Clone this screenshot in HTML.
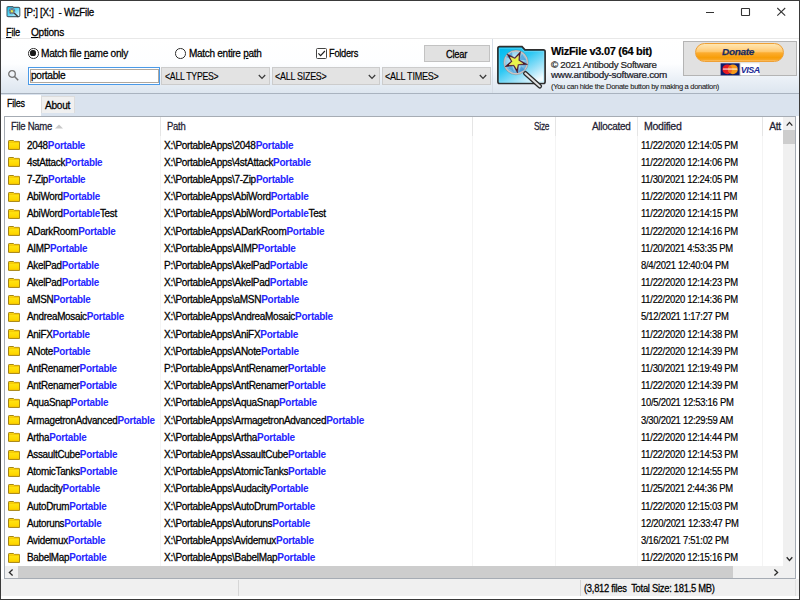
<!DOCTYPE html>
<html><head><meta charset="utf-8">
<style>
html,body{margin:0;padding:0;width:800px;height:600px;overflow:hidden;background:#fff;}
*{box-sizing:border-box;}
body{font-family:"Liberation Sans",sans-serif;font-size:10.5px;line-height:1;letter-spacing:-0.3px;color:#000;position:relative;}
.a{position:absolute;white-space:pre;}
.t{-webkit-text-stroke-width:0.26px;}
#win{position:absolute;left:0;top:0;width:800px;height:600px;border:1px solid #3a3a3a;}
.u{text-decoration:underline;text-underline-offset:1px;text-decoration-thickness:1px;}
#msep{left:1px;top:38px;width:798px;height:1px;background:#e8e8e8;}
#panel{left:1px;top:39px;width:798px;height:55px;background:linear-gradient(#ffffff 0%,#fdfeff 45%,#e9eff6 75%,#dce5ef 100%);}
#psep{left:492px;top:39px;width:1px;height:55px;background:#d6dde6;}
#pbot{left:1px;top:93px;width:798px;height:1px;background:#a9b3bf;}
#tabstrip{left:1px;top:94px;width:798px;height:22px;background:#dae3ee;}
.radio{width:10.6px;height:10.6px;border:1.3px solid #2e2e2e;border-radius:50%;background:#fff;}
.radio.on::after{content:"";position:absolute;left:1.4px;top:1.4px;width:5.2px;height:5.2px;border-radius:50%;background:#1a1a1a;}
.chk{width:11px;height:11px;border:1.25px solid #444;border-radius:1.5px;background:#fff;}
.btn{background:#e1e1e1;border:1px solid #c2c2c2;}
.combo{background:#e3e3e3;border:1px solid #cccccc;height:17.5px;top:67.2px;}
.combo svg{position:absolute;right:2.5px;top:6.2px;}
#search{left:28px;top:67.2px;width:132px;height:17.5px;border:1px solid #4a9ae8;background:#fff;}
#search .inner{position:absolute;left:0.5px;top:0.5px;right:0.5px;bottom:0.5px;border:1px solid #b0a89e;}
#tabFiles{left:1px;top:95px;width:40px;height:22px;background:#fff;}
#tabAbout{left:41px;top:96px;width:34px;height:17px;background:#f0f0f0;border:1px solid #dcdcdc;border-bottom:none;}
#list{left:4px;top:116px;width:792px;height:463px;border:1px solid #a6acb4;background:#fff;}
.hsep{top:117px;width:1px;height:19px;background:#e5e5e5;}
.csep{top:136px;width:1px;height:430px;background:#f4f4f4;}
.row{position:absolute;left:0;width:783px;height:17px;}
.row .c{position:absolute;top:3.0px;white-space:pre;transform-origin:0 0;-webkit-text-stroke-width:0.28px;}
.row .ic{position:absolute;top:3.6px;line-height:0;}
.row b{color:#2626ff;font-weight:bold;-webkit-text-stroke-width:0.05px;}
#vscroll{left:783px;top:117px;width:12px;height:449px;background:#f0f0f0;}
#vthumb{left:783px;top:130px;width:12px;height:14px;background:#cdcdcd;}
#hscroll{left:5px;top:566px;width:790px;height:12px;background:#f0f0f0;}
#hthumb{left:18px;top:566px;width:715px;height:12px;background:#cdcdcd;}
#status{left:1px;top:579px;width:798px;height:20px;background:#f0f0f0;}
#stsep{left:579.5px;top:580px;width:1px;height:15.5px;background:#d6d6d6;}
#stsep3{left:795px;top:580px;width:1px;height:15.5px;background:#e0e0e0;}
#stsep2{left:237.5px;top:580px;width:1px;height:15.5px;background:#d6d6d6;}
#stbot{left:1px;top:596px;width:798px;height:3px;background:#fff;}
#donbox{left:683px;top:41px;width:114px;height:35px;background:#e1e1e1;border:1px solid #b4b4b4;}
#pill{left:695.2px;top:42.5px;width:88.6px;height:19.5px;border-radius:10px;border:1px solid #efa035;background:linear-gradient(#ffe6b0 0%,#ffd792 25%,#ffc86a 45%,#fcad30 52%,#f79e08 80%,#f8a622 92%,#fcc06a 100%);}
</style></head><body>
<div id="win"></div>
<svg width="0" height="0" style="position:absolute"><defs><linearGradient id="fg" x1="0" y1="0" x2="0" y2="1"><stop offset="0" stop-color="#ffe81a"/><stop offset="0.75" stop-color="#ffd800"/><stop offset="1" stop-color="#eebc00"/></linearGradient></defs></svg>

<!-- title bar -->
<svg class="a" style="left:6px;top:5px" width="16" height="14" viewBox="0 0 16 14">
 <defs><linearGradient id="tg" x1="0" y1="0" x2="1" y2="1"><stop offset="0" stop-color="#00c4f2"/><stop offset="0.5" stop-color="#5cd8f8"/><stop offset="1" stop-color="#f4fcff"/></linearGradient></defs>
 <path d="M2.2 1.6 L6.6 1.6 L7.6 2.4 L12.6 2.4 Q13.8 2.4 13.8 3.6 L13.8 10.4 Q13.8 11.6 12.6 11.6 L2.2 11.6 Q1 11.6 1 10.4 L1 2.8 Q1 1.6 2.2 1.6 Z" fill="url(#tg)" stroke="#4a6470" stroke-width="1.1"/>
 <path d="M8.6 8.4 L11.8 11.5" stroke="#3a3a3a" stroke-width="1.4" stroke-linecap="round"/>
 <circle cx="5.9" cy="6" r="2.9" fill="#5aa8d8" stroke="#7a8a9a" stroke-width="0.9"/>
 <path d="M5.9 3.5 L6.7 5.3 L8.5 5.4 L7.1 6.6 L7.6 8.4 L5.9 7.4 L4.2 8.4 L4.7 6.6 L3.3 5.4 L5.1 5.3 Z" fill="#f2f24a" stroke="#3a3a6a" stroke-width="0.5"/>
</svg>
<svg class="a" style="left:700px;top:0" width="99" height="22" viewBox="0 0 99 22">
 <path d="M6 12.5 H14" stroke="#333" stroke-width="1"/>
 <rect x="41.5" y="8.5" width="8" height="7" rx="0.5" fill="none" stroke="#333" stroke-width="1.1"/>
 <path d="M77.3 8 L85.2 15.7 M85.2 8 L77.3 15.7" stroke="#333" stroke-width="1.05"/>
</svg>
<div class="a" id="msep"></div>

<!-- top panel -->
<div class="a" id="panel"></div>
<div class="a" id="psep"></div>
<div class="a" id="pbot"></div>
<div class="a" id="tabstrip"></div>

<div class="a radio on" style="left:28.1px;top:48.1px"></div>
<div class="a radio" style="left:175.3px;top:48.1px"></div>
<div class="a chk" style="left:316px;top:48px"></div>
<svg class="a" style="left:316px;top:48px" width="11" height="11" viewBox="0 0 11 11"><path d="M2.4 5.3 L4.6 7.6 L8.9 3" fill="none" stroke="#222" stroke-width="1.2"/></svg>
<div class="a btn" style="left:424px;top:45.3px;width:66px;height:16.5px"></div>

<svg class="a" style="left:8px;top:70px" width="12" height="12" viewBox="0 0 12 12">
 <circle cx="4" cy="4" r="3.3" fill="none" stroke="#747474" stroke-width="1.3"/>
 <path d="M6.5 6.5 L10.2 10.2" stroke="#747474" stroke-width="1.5"/>
</svg>
<div class="a" id="search"><div class="inner"></div></div>

<div class="a combo" style="left:161.2px;width:108.5px"><svg width="8" height="6" viewBox="0 0 8 6"><path d="M0.8 1 L4 4.4 L7.2 1" fill="none" stroke="#3a3a3a" stroke-width="1.25"/></svg></div>
<div class="a combo" style="left:271.6px;width:108.2px"><svg width="8" height="6" viewBox="0 0 8 6"><path d="M0.8 1 L4 4.4 L7.2 1" fill="none" stroke="#3a3a3a" stroke-width="1.25"/></svg></div>
<div class="a combo" style="left:381.5px;width:109px"><svg width="8" height="6" viewBox="0 0 8 6"><path d="M0.8 1 L4 4.4 L7.2 1" fill="none" stroke="#3a3a3a" stroke-width="1.25"/></svg></div>

<!-- logo -->
<svg class="a" style="left:490px;top:40px" width="60" height="50" viewBox="490 40 60 50">
 <defs>
  <linearGradient id="lg" x1="0.1" y1="0" x2="0.9" y2="1"><stop offset="0" stop-color="#00bcf0"/><stop offset="0.4" stop-color="#2ec8f3"/><stop offset="0.72" stop-color="#a6e4f9"/><stop offset="0.92" stop-color="#f2fbff"/></linearGradient>
  <radialGradient id="lens" cx="0.45" cy="0.4" r="0.7"><stop offset="0" stop-color="#d8f2fb"/><stop offset="0.55" stop-color="#8fd0ee"/><stop offset="1" stop-color="#3a8ed0"/></radialGradient>
 </defs>
 <path d="M499.6 46.6 L522 46.6 L525 49.9 L543.4 49.9 Q545.1 49.9 545.1 51.6 L545.1 81.8 Q545.1 83.5 543.4 83.5 L499.6 83.5 Q497.9 83.5 497.9 81.8 L497.9 48.3 Q497.9 46.6 499.6 46.6 Z" fill="url(#lg)" stroke="#2e2e2e" stroke-width="1.7"/>
 <path d="M499.4 48.3 L521.3 48.3 L524.3 51.5 L543.5 51.5 L543.5 82 L499.4 82 Z" fill="none" stroke="#8fe0f8" stroke-width="0.6" opacity="0.7"/>
 <path d="M525.3 73.3 L539.8 86.3" stroke="#2a2a2a" stroke-width="4.6" stroke-linecap="round"/>
 <path d="M525.3 73.3 L539.8 86.3" stroke="#e0e0e0" stroke-width="2" stroke-linecap="round"/>
 <circle cx="515.9" cy="62.4" r="11.5" fill="url(#lens)" stroke="#cbc4c4" stroke-width="1.6"/>
 <circle cx="515.9" cy="62.4" r="12.4" fill="none" stroke="#6a6a6a" stroke-width="0.5" opacity="0.6"/>
 <path d="M506 57 L512 52 L513 60 Z M522 54 L526 60 L519 60 Z M508 68 L514 72 L512 65 Z M521 66 L525 70 L519 72 Z" fill="#2f8ad2" opacity="0.55"/>
  <path d="M520.50 51.50 L519.36 60.04 L527.50 64.50 L518.49 65.03 L517.50 73.00 L513.50 65.75 L505.00 66.70 L511.26 61.24 L507.00 54.00 L514.70 57.71 Z" fill="#4a1526" stroke="#4a1526" stroke-width="0.5" stroke-linejoin="miter"/>
 <path d="M518.60 55.47 L518.28 60.57 L522.94 63.53 L517.66 64.17 L516.74 68.80 L514.06 64.69 L508.99 64.89 L512.44 61.44 L510.23 57.02 L514.93 58.89 Z" fill="#e9f54a" stroke="#f4f8a0" stroke-width="0.4"/>
</svg>

<div class="a" id="donbox"></div>
<div class="a" id="pill"></div>
<svg class="a" style="left:720px;top:63px" width="40" height="13" viewBox="0 0 40 13">
 <rect x="0.6" y="0.3" width="19" height="12" fill="#0c1c6c"/>
 <circle cx="7.3" cy="6.3" r="4.9" fill="#e41b23"/>
 <circle cx="12.9" cy="6.3" r="4.9" fill="#f59a1a"/>
 <path d="M10.1 2.3 A4.9 4.9 0 0 1 10.1 10.3 A4.9 4.9 0 0 1 10.1 2.3 Z" fill="#f26522"/>
 <rect x="3" y="5.2" width="14" height="1.8" fill="#ffffff" opacity="0.55"/>
 <rect x="21" y="0.3" width="18.5" height="12" fill="#ffffff"/>
 <text x="30.3" y="9.9" font-family="Liberation Sans" font-weight="bold" font-style="italic" font-size="9" letter-spacing="-0.5" fill="#1b2a96" text-anchor="middle">VISA</text>
</svg>

<!-- tabs -->
<div class="a" id="tabFiles"></div>
<div class="a" id="tabAbout"></div>

<!-- list -->
<div class="a" id="list"></div>
<div class="a hsep" style="left:160px"></div>
<div class="a hsep" style="left:472px"></div>
<div class="a hsep" style="left:555px"></div>
<div class="a hsep" style="left:637px"></div>
<div class="a hsep" style="left:762px"></div>
<div class="a csep" style="left:160px"></div>
<div class="a csep" style="left:472px"></div>
<div class="a csep" style="left:555px"></div>
<div class="a csep" style="left:637px"></div>
<div class="a csep" style="left:762px"></div>
<svg class="a" style="left:55px;top:124px" width="8" height="5" viewBox="0 0 8 5"><path d="M0 4.5 L4 0.5 L8 4.5 Z" fill="#c8c8c8"/></svg>

<div class="row" style="top:136.60px"><span class="ic" style="left:8px"><svg width="12" height="10" viewBox="0 0 12 10"><path d="M0.5 1.2 Q0.5 0.5 1.2 0.5 L5.4 0.5 L6.4 1.4 L11 1.4 Q11.6 1.4 11.6 2 L11.6 9 Q11.6 9.6 11 9.6 L1.2 9.6 Q0.5 9.6 0.5 9 Z" fill="url(#fg)" stroke="#9a7808" stroke-width="0.9"/><path d="M1 2.1 L11.1 2.1" stroke="#f2bc00" stroke-width="1"/></svg></span><span class="c" style="left:26.7px;transform:scaleX(0.94)">2048<b>Portable</b></span><span class="c" style="left:164.2px;transform:scaleX(0.953)">X:\PortableApps\2048<b>Portable</b></span><span class="c dt" style="left:641px;transform:scaleX(0.9);-webkit-text-stroke-width:0.18px">11/22/2020 12:14:05 PM</span></div>
<div class="row" style="top:153.79px"><span class="ic" style="left:8px"><svg width="12" height="10" viewBox="0 0 12 10"><path d="M0.5 1.2 Q0.5 0.5 1.2 0.5 L5.4 0.5 L6.4 1.4 L11 1.4 Q11.6 1.4 11.6 2 L11.6 9 Q11.6 9.6 11 9.6 L1.2 9.6 Q0.5 9.6 0.5 9 Z" fill="url(#fg)" stroke="#9a7808" stroke-width="0.9"/><path d="M1 2.1 L11.1 2.1" stroke="#f2bc00" stroke-width="1"/></svg></span><span class="c" style="left:26.7px;transform:scaleX(0.94)">4stAttack<b>Portable</b></span><span class="c" style="left:164.2px;transform:scaleX(0.953)">X:\PortableApps\4stAttack<b>Portable</b></span><span class="c dt" style="left:641px;transform:scaleX(0.9);-webkit-text-stroke-width:0.18px">11/22/2020 12:14:06 PM</span></div>
<div class="row" style="top:170.97px"><span class="ic" style="left:8px"><svg width="12" height="10" viewBox="0 0 12 10"><path d="M0.5 1.2 Q0.5 0.5 1.2 0.5 L5.4 0.5 L6.4 1.4 L11 1.4 Q11.6 1.4 11.6 2 L11.6 9 Q11.6 9.6 11 9.6 L1.2 9.6 Q0.5 9.6 0.5 9 Z" fill="url(#fg)" stroke="#9a7808" stroke-width="0.9"/><path d="M1 2.1 L11.1 2.1" stroke="#f2bc00" stroke-width="1"/></svg></span><span class="c" style="left:26.7px;transform:scaleX(0.94)">7-Zip<b>Portable</b></span><span class="c" style="left:164.2px;transform:scaleX(0.953)">X:\PortableApps\7-Zip<b>Portable</b></span><span class="c dt" style="left:641px;transform:scaleX(0.9);-webkit-text-stroke-width:0.18px">11/30/2021 12:24:05 PM</span></div>
<div class="row" style="top:188.16px"><span class="ic" style="left:8px"><svg width="12" height="10" viewBox="0 0 12 10"><path d="M0.5 1.2 Q0.5 0.5 1.2 0.5 L5.4 0.5 L6.4 1.4 L11 1.4 Q11.6 1.4 11.6 2 L11.6 9 Q11.6 9.6 11 9.6 L1.2 9.6 Q0.5 9.6 0.5 9 Z" fill="url(#fg)" stroke="#9a7808" stroke-width="0.9"/><path d="M1 2.1 L11.1 2.1" stroke="#f2bc00" stroke-width="1"/></svg></span><span class="c" style="left:26.7px;transform:scaleX(0.94)">AbiWord<b>Portable</b></span><span class="c" style="left:164.2px;transform:scaleX(0.953)">X:\PortableApps\AbiWord<b>Portable</b></span><span class="c dt" style="left:641px;transform:scaleX(0.9);-webkit-text-stroke-width:0.18px">11/22/2020 12:14:11 PM</span></div>
<div class="row" style="top:205.35px"><span class="ic" style="left:8px"><svg width="12" height="10" viewBox="0 0 12 10"><path d="M0.5 1.2 Q0.5 0.5 1.2 0.5 L5.4 0.5 L6.4 1.4 L11 1.4 Q11.6 1.4 11.6 2 L11.6 9 Q11.6 9.6 11 9.6 L1.2 9.6 Q0.5 9.6 0.5 9 Z" fill="url(#fg)" stroke="#9a7808" stroke-width="0.9"/><path d="M1 2.1 L11.1 2.1" stroke="#f2bc00" stroke-width="1"/></svg></span><span class="c" style="left:26.7px;transform:scaleX(0.94)">AbiWord<b>Portable</b>Test</span><span class="c" style="left:164.2px;transform:scaleX(0.953)">X:\PortableApps\AbiWord<b>Portable</b>Test</span><span class="c dt" style="left:641px;transform:scaleX(0.9);-webkit-text-stroke-width:0.18px">11/22/2020 12:14:15 PM</span></div>
<div class="row" style="top:222.54px"><span class="ic" style="left:8px"><svg width="12" height="10" viewBox="0 0 12 10"><path d="M0.5 1.2 Q0.5 0.5 1.2 0.5 L5.4 0.5 L6.4 1.4 L11 1.4 Q11.6 1.4 11.6 2 L11.6 9 Q11.6 9.6 11 9.6 L1.2 9.6 Q0.5 9.6 0.5 9 Z" fill="url(#fg)" stroke="#9a7808" stroke-width="0.9"/><path d="M1 2.1 L11.1 2.1" stroke="#f2bc00" stroke-width="1"/></svg></span><span class="c" style="left:26.7px;transform:scaleX(0.94)">ADarkRoom<b>Portable</b></span><span class="c" style="left:164.2px;transform:scaleX(0.953)">X:\PortableApps\ADarkRoom<b>Portable</b></span><span class="c dt" style="left:641px;transform:scaleX(0.9);-webkit-text-stroke-width:0.18px">11/22/2020 12:14:16 PM</span></div>
<div class="row" style="top:239.72px"><span class="ic" style="left:8px"><svg width="12" height="10" viewBox="0 0 12 10"><path d="M0.5 1.2 Q0.5 0.5 1.2 0.5 L5.4 0.5 L6.4 1.4 L11 1.4 Q11.6 1.4 11.6 2 L11.6 9 Q11.6 9.6 11 9.6 L1.2 9.6 Q0.5 9.6 0.5 9 Z" fill="url(#fg)" stroke="#9a7808" stroke-width="0.9"/><path d="M1 2.1 L11.1 2.1" stroke="#f2bc00" stroke-width="1"/></svg></span><span class="c" style="left:26.7px;transform:scaleX(0.94)">AIMP<b>Portable</b></span><span class="c" style="left:164.2px;transform:scaleX(0.953)">X:\PortableApps\AIMP<b>Portable</b></span><span class="c dt" style="left:641px;transform:scaleX(0.9);-webkit-text-stroke-width:0.18px">11/20/2021 4:53:35 PM</span></div>
<div class="row" style="top:256.91px"><span class="ic" style="left:8px"><svg width="12" height="10" viewBox="0 0 12 10"><path d="M0.5 1.2 Q0.5 0.5 1.2 0.5 L5.4 0.5 L6.4 1.4 L11 1.4 Q11.6 1.4 11.6 2 L11.6 9 Q11.6 9.6 11 9.6 L1.2 9.6 Q0.5 9.6 0.5 9 Z" fill="url(#fg)" stroke="#9a7808" stroke-width="0.9"/><path d="M1 2.1 L11.1 2.1" stroke="#f2bc00" stroke-width="1"/></svg></span><span class="c" style="left:26.7px;transform:scaleX(0.94)">AkelPad<b>Portable</b></span><span class="c" style="left:164.2px;transform:scaleX(0.953)">P:\PortableApps\AkelPad<b>Portable</b></span><span class="c dt" style="left:641px;transform:scaleX(0.9);-webkit-text-stroke-width:0.18px">8/4/2021 12:40:04 PM</span></div>
<div class="row" style="top:274.10px"><span class="ic" style="left:8px"><svg width="12" height="10" viewBox="0 0 12 10"><path d="M0.5 1.2 Q0.5 0.5 1.2 0.5 L5.4 0.5 L6.4 1.4 L11 1.4 Q11.6 1.4 11.6 2 L11.6 9 Q11.6 9.6 11 9.6 L1.2 9.6 Q0.5 9.6 0.5 9 Z" fill="url(#fg)" stroke="#9a7808" stroke-width="0.9"/><path d="M1 2.1 L11.1 2.1" stroke="#f2bc00" stroke-width="1"/></svg></span><span class="c" style="left:26.7px;transform:scaleX(0.94)">AkelPad<b>Portable</b></span><span class="c" style="left:164.2px;transform:scaleX(0.953)">X:\PortableApps\AkelPad<b>Portable</b></span><span class="c dt" style="left:641px;transform:scaleX(0.9);-webkit-text-stroke-width:0.18px">11/22/2020 12:14:23 PM</span></div>
<div class="row" style="top:291.29px"><span class="ic" style="left:8px"><svg width="12" height="10" viewBox="0 0 12 10"><path d="M0.5 1.2 Q0.5 0.5 1.2 0.5 L5.4 0.5 L6.4 1.4 L11 1.4 Q11.6 1.4 11.6 2 L11.6 9 Q11.6 9.6 11 9.6 L1.2 9.6 Q0.5 9.6 0.5 9 Z" fill="url(#fg)" stroke="#9a7808" stroke-width="0.9"/><path d="M1 2.1 L11.1 2.1" stroke="#f2bc00" stroke-width="1"/></svg></span><span class="c" style="left:26.7px;transform:scaleX(0.94)">aMSN<b>Portable</b></span><span class="c" style="left:164.2px;transform:scaleX(0.953)">X:\PortableApps\aMSN<b>Portable</b></span><span class="c dt" style="left:641px;transform:scaleX(0.9);-webkit-text-stroke-width:0.18px">11/22/2020 12:14:36 PM</span></div>
<div class="row" style="top:308.48px"><span class="ic" style="left:8px"><svg width="12" height="10" viewBox="0 0 12 10"><path d="M0.5 1.2 Q0.5 0.5 1.2 0.5 L5.4 0.5 L6.4 1.4 L11 1.4 Q11.6 1.4 11.6 2 L11.6 9 Q11.6 9.6 11 9.6 L1.2 9.6 Q0.5 9.6 0.5 9 Z" fill="url(#fg)" stroke="#9a7808" stroke-width="0.9"/><path d="M1 2.1 L11.1 2.1" stroke="#f2bc00" stroke-width="1"/></svg></span><span class="c" style="left:26.7px;transform:scaleX(0.94)">AndreaMosaic<b>Portable</b></span><span class="c" style="left:164.2px;transform:scaleX(0.953)">X:\PortableApps\AndreaMosaic<b>Portable</b></span><span class="c dt" style="left:641px;transform:scaleX(0.9);-webkit-text-stroke-width:0.18px">5/12/2021 1:17:27 PM</span></div>
<div class="row" style="top:325.66px"><span class="ic" style="left:8px"><svg width="12" height="10" viewBox="0 0 12 10"><path d="M0.5 1.2 Q0.5 0.5 1.2 0.5 L5.4 0.5 L6.4 1.4 L11 1.4 Q11.6 1.4 11.6 2 L11.6 9 Q11.6 9.6 11 9.6 L1.2 9.6 Q0.5 9.6 0.5 9 Z" fill="url(#fg)" stroke="#9a7808" stroke-width="0.9"/><path d="M1 2.1 L11.1 2.1" stroke="#f2bc00" stroke-width="1"/></svg></span><span class="c" style="left:26.7px;transform:scaleX(0.94)">AniFX<b>Portable</b></span><span class="c" style="left:164.2px;transform:scaleX(0.953)">X:\PortableApps\AniFX<b>Portable</b></span><span class="c dt" style="left:641px;transform:scaleX(0.9);-webkit-text-stroke-width:0.18px">11/22/2020 12:14:38 PM</span></div>
<div class="row" style="top:342.85px"><span class="ic" style="left:8px"><svg width="12" height="10" viewBox="0 0 12 10"><path d="M0.5 1.2 Q0.5 0.5 1.2 0.5 L5.4 0.5 L6.4 1.4 L11 1.4 Q11.6 1.4 11.6 2 L11.6 9 Q11.6 9.6 11 9.6 L1.2 9.6 Q0.5 9.6 0.5 9 Z" fill="url(#fg)" stroke="#9a7808" stroke-width="0.9"/><path d="M1 2.1 L11.1 2.1" stroke="#f2bc00" stroke-width="1"/></svg></span><span class="c" style="left:26.7px;transform:scaleX(0.94)">ANote<b>Portable</b></span><span class="c" style="left:164.2px;transform:scaleX(0.953)">X:\PortableApps\ANote<b>Portable</b></span><span class="c dt" style="left:641px;transform:scaleX(0.9);-webkit-text-stroke-width:0.18px">11/22/2020 12:14:39 PM</span></div>
<div class="row" style="top:360.04px"><span class="ic" style="left:8px"><svg width="12" height="10" viewBox="0 0 12 10"><path d="M0.5 1.2 Q0.5 0.5 1.2 0.5 L5.4 0.5 L6.4 1.4 L11 1.4 Q11.6 1.4 11.6 2 L11.6 9 Q11.6 9.6 11 9.6 L1.2 9.6 Q0.5 9.6 0.5 9 Z" fill="url(#fg)" stroke="#9a7808" stroke-width="0.9"/><path d="M1 2.1 L11.1 2.1" stroke="#f2bc00" stroke-width="1"/></svg></span><span class="c" style="left:26.7px;transform:scaleX(0.94)">AntRenamer<b>Portable</b></span><span class="c" style="left:164.2px;transform:scaleX(0.953)">P:\PortableApps\AntRenamer<b>Portable</b></span><span class="c dt" style="left:641px;transform:scaleX(0.9);-webkit-text-stroke-width:0.18px">11/30/2021 12:19:49 PM</span></div>
<div class="row" style="top:377.23px"><span class="ic" style="left:8px"><svg width="12" height="10" viewBox="0 0 12 10"><path d="M0.5 1.2 Q0.5 0.5 1.2 0.5 L5.4 0.5 L6.4 1.4 L11 1.4 Q11.6 1.4 11.6 2 L11.6 9 Q11.6 9.6 11 9.6 L1.2 9.6 Q0.5 9.6 0.5 9 Z" fill="url(#fg)" stroke="#9a7808" stroke-width="0.9"/><path d="M1 2.1 L11.1 2.1" stroke="#f2bc00" stroke-width="1"/></svg></span><span class="c" style="left:26.7px;transform:scaleX(0.94)">AntRenamer<b>Portable</b></span><span class="c" style="left:164.2px;transform:scaleX(0.953)">X:\PortableApps\AntRenamer<b>Portable</b></span><span class="c dt" style="left:641px;transform:scaleX(0.9);-webkit-text-stroke-width:0.18px">11/22/2020 12:14:39 PM</span></div>
<div class="row" style="top:394.41px"><span class="ic" style="left:8px"><svg width="12" height="10" viewBox="0 0 12 10"><path d="M0.5 1.2 Q0.5 0.5 1.2 0.5 L5.4 0.5 L6.4 1.4 L11 1.4 Q11.6 1.4 11.6 2 L11.6 9 Q11.6 9.6 11 9.6 L1.2 9.6 Q0.5 9.6 0.5 9 Z" fill="url(#fg)" stroke="#9a7808" stroke-width="0.9"/><path d="M1 2.1 L11.1 2.1" stroke="#f2bc00" stroke-width="1"/></svg></span><span class="c" style="left:26.7px;transform:scaleX(0.94)">AquaSnap<b>Portable</b></span><span class="c" style="left:164.2px;transform:scaleX(0.953)">X:\PortableApps\AquaSnap<b>Portable</b></span><span class="c dt" style="left:641px;transform:scaleX(0.9);-webkit-text-stroke-width:0.18px">10/5/2021 12:53:16 PM</span></div>
<div class="row" style="top:411.60px"><span class="ic" style="left:8px"><svg width="12" height="10" viewBox="0 0 12 10"><path d="M0.5 1.2 Q0.5 0.5 1.2 0.5 L5.4 0.5 L6.4 1.4 L11 1.4 Q11.6 1.4 11.6 2 L11.6 9 Q11.6 9.6 11 9.6 L1.2 9.6 Q0.5 9.6 0.5 9 Z" fill="url(#fg)" stroke="#9a7808" stroke-width="0.9"/><path d="M1 2.1 L11.1 2.1" stroke="#f2bc00" stroke-width="1"/></svg></span><span class="c" style="left:26.7px;transform:scaleX(0.94)">ArmagetronAdvanced<b>Portable</b></span><span class="c" style="left:164.2px;transform:scaleX(0.953)">X:\PortableApps\ArmagetronAdvanced<b>Portable</b></span><span class="c dt" style="left:641px;transform:scaleX(0.9);-webkit-text-stroke-width:0.18px">3/30/2021 12:29:59 AM</span></div>
<div class="row" style="top:428.79px"><span class="ic" style="left:8px"><svg width="12" height="10" viewBox="0 0 12 10"><path d="M0.5 1.2 Q0.5 0.5 1.2 0.5 L5.4 0.5 L6.4 1.4 L11 1.4 Q11.6 1.4 11.6 2 L11.6 9 Q11.6 9.6 11 9.6 L1.2 9.6 Q0.5 9.6 0.5 9 Z" fill="url(#fg)" stroke="#9a7808" stroke-width="0.9"/><path d="M1 2.1 L11.1 2.1" stroke="#f2bc00" stroke-width="1"/></svg></span><span class="c" style="left:26.7px;transform:scaleX(0.94)">Artha<b>Portable</b></span><span class="c" style="left:164.2px;transform:scaleX(0.953)">X:\PortableApps\Artha<b>Portable</b></span><span class="c dt" style="left:641px;transform:scaleX(0.9);-webkit-text-stroke-width:0.18px">11/22/2020 12:14:44 PM</span></div>
<div class="row" style="top:445.98px"><span class="ic" style="left:8px"><svg width="12" height="10" viewBox="0 0 12 10"><path d="M0.5 1.2 Q0.5 0.5 1.2 0.5 L5.4 0.5 L6.4 1.4 L11 1.4 Q11.6 1.4 11.6 2 L11.6 9 Q11.6 9.6 11 9.6 L1.2 9.6 Q0.5 9.6 0.5 9 Z" fill="url(#fg)" stroke="#9a7808" stroke-width="0.9"/><path d="M1 2.1 L11.1 2.1" stroke="#f2bc00" stroke-width="1"/></svg></span><span class="c" style="left:26.7px;transform:scaleX(0.94)">AssaultCube<b>Portable</b></span><span class="c" style="left:164.2px;transform:scaleX(0.953)">X:\PortableApps\AssaultCube<b>Portable</b></span><span class="c dt" style="left:641px;transform:scaleX(0.9);-webkit-text-stroke-width:0.18px">11/22/2020 12:14:53 PM</span></div>
<div class="row" style="top:463.16px"><span class="ic" style="left:8px"><svg width="12" height="10" viewBox="0 0 12 10"><path d="M0.5 1.2 Q0.5 0.5 1.2 0.5 L5.4 0.5 L6.4 1.4 L11 1.4 Q11.6 1.4 11.6 2 L11.6 9 Q11.6 9.6 11 9.6 L1.2 9.6 Q0.5 9.6 0.5 9 Z" fill="url(#fg)" stroke="#9a7808" stroke-width="0.9"/><path d="M1 2.1 L11.1 2.1" stroke="#f2bc00" stroke-width="1"/></svg></span><span class="c" style="left:26.7px;transform:scaleX(0.94)">AtomicTanks<b>Portable</b></span><span class="c" style="left:164.2px;transform:scaleX(0.953)">X:\PortableApps\AtomicTanks<b>Portable</b></span><span class="c dt" style="left:641px;transform:scaleX(0.9);-webkit-text-stroke-width:0.18px">11/22/2020 12:14:55 PM</span></div>
<div class="row" style="top:480.35px"><span class="ic" style="left:8px"><svg width="12" height="10" viewBox="0 0 12 10"><path d="M0.5 1.2 Q0.5 0.5 1.2 0.5 L5.4 0.5 L6.4 1.4 L11 1.4 Q11.6 1.4 11.6 2 L11.6 9 Q11.6 9.6 11 9.6 L1.2 9.6 Q0.5 9.6 0.5 9 Z" fill="url(#fg)" stroke="#9a7808" stroke-width="0.9"/><path d="M1 2.1 L11.1 2.1" stroke="#f2bc00" stroke-width="1"/></svg></span><span class="c" style="left:26.7px;transform:scaleX(0.94)">Audacity<b>Portable</b></span><span class="c" style="left:164.2px;transform:scaleX(0.953)">X:\PortableApps\Audacity<b>Portable</b></span><span class="c dt" style="left:641px;transform:scaleX(0.9);-webkit-text-stroke-width:0.18px">11/25/2021 2:44:36 PM</span></div>
<div class="row" style="top:497.54px"><span class="ic" style="left:8px"><svg width="12" height="10" viewBox="0 0 12 10"><path d="M0.5 1.2 Q0.5 0.5 1.2 0.5 L5.4 0.5 L6.4 1.4 L11 1.4 Q11.6 1.4 11.6 2 L11.6 9 Q11.6 9.6 11 9.6 L1.2 9.6 Q0.5 9.6 0.5 9 Z" fill="url(#fg)" stroke="#9a7808" stroke-width="0.9"/><path d="M1 2.1 L11.1 2.1" stroke="#f2bc00" stroke-width="1"/></svg></span><span class="c" style="left:26.7px;transform:scaleX(0.94)">AutoDrum<b>Portable</b></span><span class="c" style="left:164.2px;transform:scaleX(0.953)">X:\PortableApps\AutoDrum<b>Portable</b></span><span class="c dt" style="left:641px;transform:scaleX(0.9);-webkit-text-stroke-width:0.18px">11/22/2020 12:15:03 PM</span></div>
<div class="row" style="top:514.73px"><span class="ic" style="left:8px"><svg width="12" height="10" viewBox="0 0 12 10"><path d="M0.5 1.2 Q0.5 0.5 1.2 0.5 L5.4 0.5 L6.4 1.4 L11 1.4 Q11.6 1.4 11.6 2 L11.6 9 Q11.6 9.6 11 9.6 L1.2 9.6 Q0.5 9.6 0.5 9 Z" fill="url(#fg)" stroke="#9a7808" stroke-width="0.9"/><path d="M1 2.1 L11.1 2.1" stroke="#f2bc00" stroke-width="1"/></svg></span><span class="c" style="left:26.7px;transform:scaleX(0.94)">Autoruns<b>Portable</b></span><span class="c" style="left:164.2px;transform:scaleX(0.953)">X:\PortableApps\Autoruns<b>Portable</b></span><span class="c dt" style="left:641px;transform:scaleX(0.9);-webkit-text-stroke-width:0.18px">12/20/2021 12:33:47 PM</span></div>
<div class="row" style="top:531.91px"><span class="ic" style="left:8px"><svg width="12" height="10" viewBox="0 0 12 10"><path d="M0.5 1.2 Q0.5 0.5 1.2 0.5 L5.4 0.5 L6.4 1.4 L11 1.4 Q11.6 1.4 11.6 2 L11.6 9 Q11.6 9.6 11 9.6 L1.2 9.6 Q0.5 9.6 0.5 9 Z" fill="url(#fg)" stroke="#9a7808" stroke-width="0.9"/><path d="M1 2.1 L11.1 2.1" stroke="#f2bc00" stroke-width="1"/></svg></span><span class="c" style="left:26.7px;transform:scaleX(0.94)">Avidemux<b>Portable</b></span><span class="c" style="left:164.2px;transform:scaleX(0.953)">X:\PortableApps\Avidemux<b>Portable</b></span><span class="c dt" style="left:641px;transform:scaleX(0.9);-webkit-text-stroke-width:0.18px">3/16/2021 7:51:02 PM</span></div>
<div class="row" style="top:549.10px"><span class="ic" style="left:8px"><svg width="12" height="10" viewBox="0 0 12 10"><path d="M0.5 1.2 Q0.5 0.5 1.2 0.5 L5.4 0.5 L6.4 1.4 L11 1.4 Q11.6 1.4 11.6 2 L11.6 9 Q11.6 9.6 11 9.6 L1.2 9.6 Q0.5 9.6 0.5 9 Z" fill="url(#fg)" stroke="#9a7808" stroke-width="0.9"/><path d="M1 2.1 L11.1 2.1" stroke="#f2bc00" stroke-width="1"/></svg></span><span class="c" style="left:26.7px;transform:scaleX(0.94)">BabelMap<b>Portable</b></span><span class="c" style="left:164.2px;transform:scaleX(0.953)">X:\PortableApps\BabelMap<b>Portable</b></span><span class="c dt" style="left:641px;transform:scaleX(0.9);-webkit-text-stroke-width:0.18px">11/22/2020 12:15:16 PM</span></div>

<div class="a" id="vscroll"></div>
<div class="a" id="vthumb"></div>
<svg class="a" style="left:785.5px;top:121px" width="7" height="6" viewBox="0 0 7 6"><path d="M0.7 4.6 L3.5 1.4 L6.3 4.6" fill="none" stroke="#2a2a2a" stroke-width="1.3"/></svg>
<svg class="a" style="left:785.5px;top:556px" width="7" height="6" viewBox="0 0 7 6"><path d="M0.7 1.2 L3.5 4.4 L6.3 1.2" fill="none" stroke="#2a2a2a" stroke-width="1.3"/></svg>
<div class="a" id="hscroll"></div>
<div class="a" id="hthumb"></div>
<svg class="a" style="left:8px;top:568.5px" width="6" height="7" viewBox="0 0 6 7"><path d="M4.6 0.6 L1.4 3.5 L4.6 6.4" fill="none" stroke="#2a2a2a" stroke-width="1.3"/></svg>
<svg class="a" style="left:772.5px;top:568.5px" width="6" height="7" viewBox="0 0 6 7"><path d="M1.4 0.6 L4.6 3.5 L1.4 6.4" fill="none" stroke="#2a2a2a" stroke-width="1.3"/></svg>

<!-- status -->
<div class="a" id="status"></div>
<div class="a" id="stsep"></div>
<div class="a" id="stsep2"></div>
<div class="a" id="stsep3"></div>
<div class="a" id="stbot"></div>

<div class="a t" id="ttl" style="left:24px;top:7.39px;transform:scaleX(0.8866);transform-origin:0 0;font-size:11px">[P:] [X:]&nbsp; - WizFile</div>
<div class="a t" id="mfile" style="left:6px;top:27.19px;transform:scaleX(0.8469);transform-origin:0 0;font-size:11px"><span class="u">F</span>ile</div>
<div class="a t" id="mopt" style="left:31px;top:27.19px;transform:scaleX(0.9211);transform-origin:0 0;font-size:11px"><span class="u">O</span>ptions</div>
<div class="a t" id="r1" style="left:41px;top:48.36px;transform:scaleX(0.9632);transform-origin:0 0;">Match file <span class="u">n</span>ame only</div>
<div class="a t" id="r2" style="left:188.75px;top:48.36px;transform:scaleX(0.9534);transform-origin:0 0;">Match entire <span class="u">p</span>ath</div>
<div class="a t" id="fold" style="left:329px;top:48.11px;transform:scaleX(0.8809);transform-origin:0 0;">Folders</div>
<div class="a t" id="clr" style="left:446px;top:48.61px;transform:scaleX(0.8901);transform-origin:0 0;">Clear</div>
<div class="a t" id="srch" style="left:30.6px;top:70.21px;transform:scaleX(0.9677);transform-origin:0 0;">portable</div>
<div class="a t" id="cb1" style="left:164.8px;top:71.11px;transform:scaleX(0.8289);transform-origin:0 0;-webkit-text-stroke-width:0.12px">&lt;ALL TYPES&gt;</div>
<div class="a t" id="cb2" style="left:275.2px;top:71.11px;transform:scaleX(0.8510);transform-origin:0 0;-webkit-text-stroke-width:0.12px">&lt;ALL SIZES&gt;</div>
<div class="a t" id="cb3" style="left:385.2px;top:71.11px;transform:scaleX(0.8618);transform-origin:0 0;-webkit-text-stroke-width:0.12px">&lt;ALL TIMES&gt;</div>
<div class="a t" id="tf" style="left:7.25px;top:97.71px;transform:scaleX(0.8587);transform-origin:0 0;">Files</div>
<div class="a t" id="ta" style="left:45px;top:99.61px;transform:scaleX(0.9633);transform-origin:0 0;">About</div>
<div class="a t" id="h1" style="left:11px;top:120.61px;transform:scaleX(0.9080);transform-origin:0 0;color:#1f2233">File Name</div>
<div class="a t" id="h2" style="left:167.25px;top:120.61px;transform:scaleX(0.9017);transform-origin:0 0;color:#1f2233">Path</div>
<div class="a t" id="h3" style="right:251px;top:120.61px;transform:scaleX(0.7955);transform-origin:100% 0;color:#1f2233">Size</div>
<div class="a t" id="h4" style="right:169.29999999999995px;top:120.61px;transform:scaleX(0.9506);transform-origin:100% 0;color:#1f2233">Allocated</div>
<div class="a t" id="h5" style="left:643.75px;top:120.61px;transform:scaleX(1.0054);transform-origin:0 0;color:#1f2233">Modified</div>
<div class="a t" id="h6" style="right:19.5px;top:120.61px;transform:scaleX(0.9830);transform-origin:100% 0;color:#1f2233">Att</div>
<div class="a t" id="st" style="left:583.6px;top:583.11px;transform:scaleX(0.8933);transform-origin:0 0;">(3,812 files&nbsp; Total Size: 181.5 MB)</div>
<div class="a t" id="ab1" style="left:551.2px;top:46.07px;transform:scaleX(0.9548);transform-origin:0 0;font-size:11.5px;font-weight:bold;-webkit-text-stroke-width:0.2px">WizFile v3.07 (64 bit)</div>
<div class="a t" id="ab2" style="left:551.2px;top:59.96px;transform:scaleX(1.0282);transform-origin:0 0;font-size:9.5px;color:#222;-webkit-text-stroke-width:0.2px">© 2021 Antibody Software</div>
<div class="a t" id="ab3" style="left:550.8px;top:70.13px;transform:scaleX(1.0134);transform-origin:0 0;font-size:9.8px;color:#1a1a2a;-webkit-text-stroke-width:0.22px">www.antibody-software.com</div>
<div class="a t" id="ab4" style="left:550.8px;top:83.4px;transform:scaleX(0.9625);transform-origin:0 0;font-size:7.8px;color:#222;-webkit-text-stroke-width:0.1px">(You can hide the Donate button by making a donation)</div>
<div class="a t" id="don" style="left:721.7px;top:47.16px;transform:scaleX(1.0524);transform-origin:0 0;font-size:9.5px;font-weight:bold;font-style:italic;color:#1a2c60;-webkit-text-stroke-width:0.25px">Donate</div>
</body></html>
